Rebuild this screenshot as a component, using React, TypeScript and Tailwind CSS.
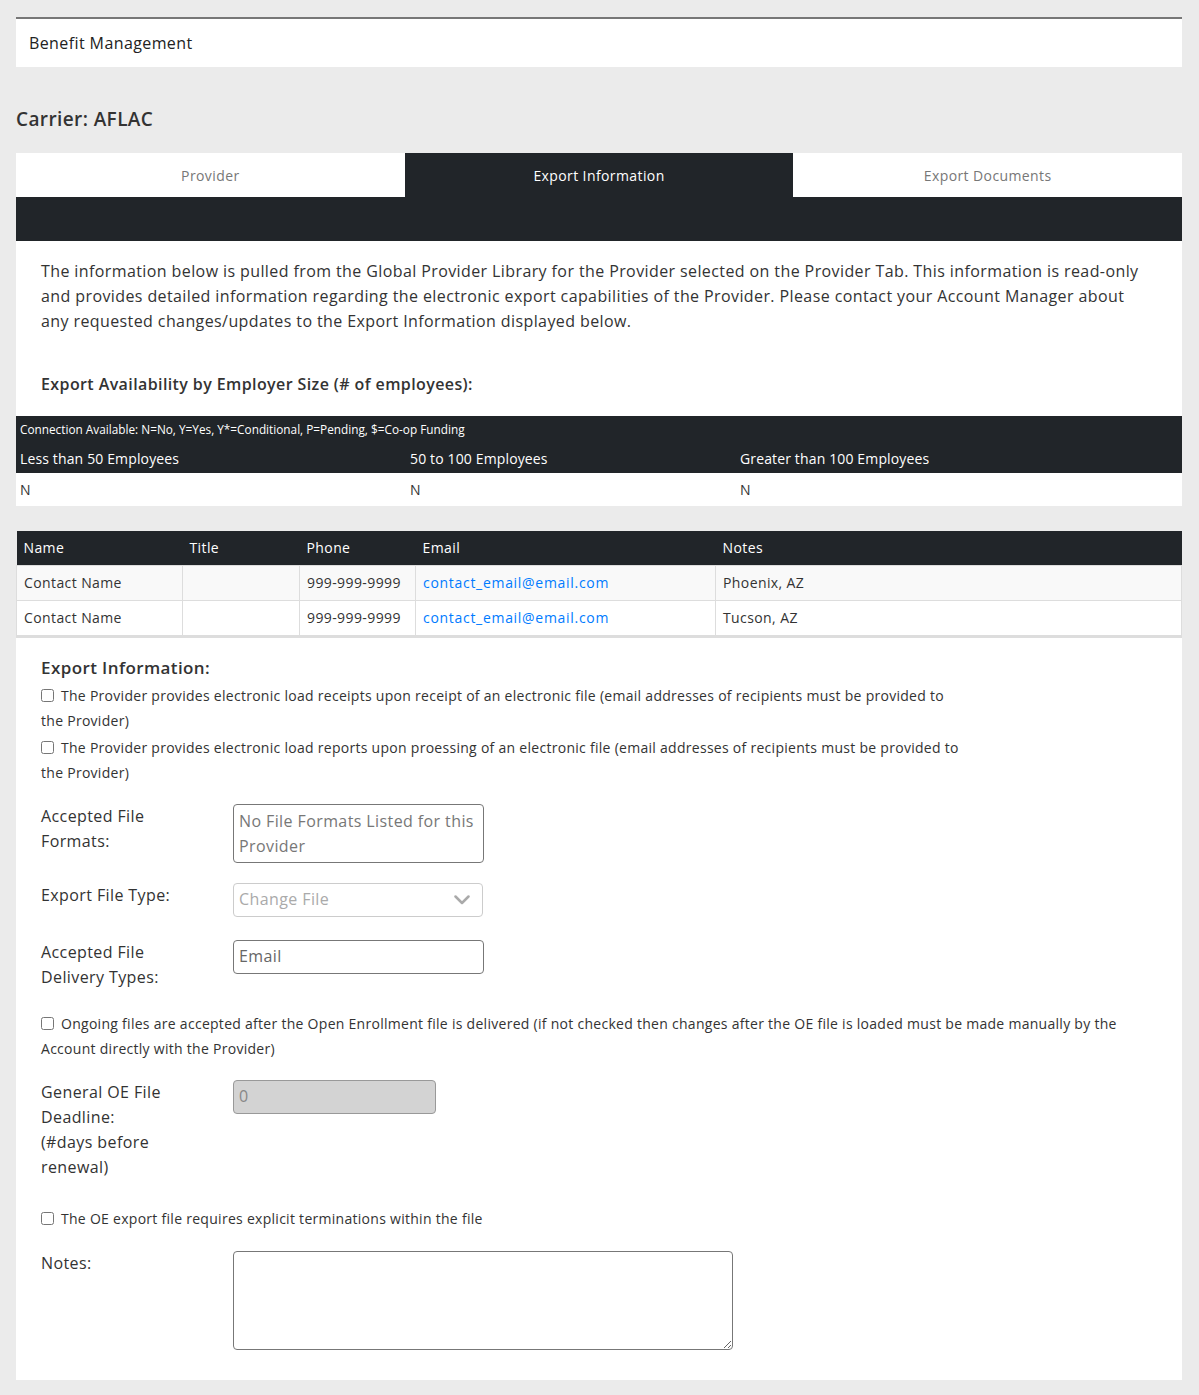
import React from "react";

function Check({ children, className = "" }: { children: React.ReactNode; className?: string }) {
  return (
    <label className={"block whitespace-nowrap tracking-[0.02em] " + className}>
      <input type="checkbox" className="mr-[7px] h-[13px] w-[13px] align-[-1px]" />
      {children}
    </label>
  );
}

export default function App() {
  const cols = "grid grid-cols-[390px_330px_1fr] items-center px-[4px]";
  return (
    <div className="min-h-[1395px] bg-[#ebebeb] pl-[16px] pr-[17px] pt-[17px] pb-[15px] font-['Open_Sans',sans-serif] tracking-[0.025em] text-[#333]">
      {/* Header */}
      <div className="flex h-[50px] items-center border-t-2 border-[#777] bg-white px-[13px] pb-[1px] text-[16px] text-[#222]">
        Benefit Management
      </div>

      <h2 className="mt-[40px] h-[24px] text-[19px] font-semibold leading-[24px] text-[#333]">Carrier: AFLAC</h2>

      {/* Tabs */}
      <div className="mt-[22px] flex h-[44px] text-[14px]">
        <div className="flex flex-1 items-center justify-center bg-white text-[#777]">Provider</div>
        <div className="flex flex-1 items-center justify-center bg-[#212529] text-white">Export Information</div>
        <div className="flex flex-1 items-center justify-center bg-white text-[#777]">Export Documents</div>
      </div>
      <div className="h-[44px] bg-[#212529]" />

      {/* Panel 1 */}
      <div className="bg-white">
        <div className="px-[25px] pt-[18px]">
          <p className="max-w-[1105px] text-[16px] leading-[25px]">
            The information below is pulled from the Global Provider Library for the Provider selected on the Provider Tab. This information is read-only and provides detailed information regarding the electronic export capabilities of the Provider. Please contact your Account Manager about any requested changes/updates to the Export Information displayed below.
          </p>
          <h3 className="mt-[38px] text-[16px] font-semibold leading-[25px]">
            Export Availability by Employer Size (# of employees):
          </h3>
        </div>
        <div className="mt-[19px]">
          <div className="bg-[#212529] text-white">
            <div className="flex h-[28px] items-center px-[4px] text-[11.8px] tracking-normal">
              Connection Available: N=No, Y=Yes, Y*=Conditional, P=Pending, $=Co-op Funding
            </div>
            <div className={cols + " h-[29px] text-[14px] tracking-[0.01em]"}>
              <div>Less than 50 Employees</div>
              <div>50 to 100 Employees</div>
              <div>Greater than 100 Employees</div>
            </div>
          </div>
          <div className={cols + " h-[33px] text-[14px]"}>
            <div>N</div>
            <div>N</div>
            <div>N</div>
          </div>
        </div>
      </div>

      {/* Contacts */}
      <div className="mt-[25px] border-b-2 border-[#ddd]">
        <table className="w-full table-fixed border-collapse text-[14px]">
          <colgroup>
            <col className="w-[166px]" />
            <col className="w-[117px]" />
            <col className="w-[116px]" />
            <col className="w-[300px]" />
            <col />
          </colgroup>
          <thead>
            <tr className="h-[34px] bg-[#212529] text-white">
              <th className="px-[7px] text-left font-medium">Name</th>
              <th className="px-[7px] text-left font-medium">Title</th>
              <th className="px-[7px] text-left font-medium">Phone</th>
              <th className="px-[7px] text-left font-medium">Email</th>
              <th className="px-[7px] text-left font-medium">Notes</th>
            </tr>
          </thead>
          <tbody>
            <tr className="h-[35px] bg-[#f9f9f9]">
              <td className="border border-[#ddd] px-[7px]">Contact Name</td>
              <td className="border border-[#ddd] px-[7px]"></td>
              <td className="border border-[#ddd] px-[7px]">999-999-9999</td>
              <td className="border border-[#ddd] px-[7px] tracking-[0.05em] text-[#007bff]">contact_email@email.com</td>
              <td className="border border-[#ddd] px-[7px]">Phoenix, AZ</td>
            </tr>
            <tr className="h-[35px] bg-white">
              <td className="border border-[#ddd] px-[7px]">Contact Name</td>
              <td className="border border-[#ddd] px-[7px]"></td>
              <td className="border border-[#ddd] px-[7px]">999-999-9999</td>
              <td className="border border-[#ddd] px-[7px] tracking-[0.05em] text-[#007bff]">contact_email@email.com</td>
              <td className="border border-[#ddd] px-[7px]">Tucson, AZ</td>
            </tr>
          </tbody>
        </table>
      </div>

      {/* Panel 2 */}
      <div className="bg-white px-[25px] pt-[17px] pb-[30px]">
        <h3 className="text-[17px] font-semibold leading-[25px]">Export Information:</h3>
        <div className="mt-[3px] text-[14px] leading-[25px]">
          <Check>
            The Provider provides electronic load receipts upon receipt of an electronic file (email addresses of recipients must be provided to
            <br />
            the Provider)
          </Check>
          <Check className="mt-[2px]">
            The Provider provides electronic load reports upon proessing of an electronic file (email addresses of recipients must be provided to
            <br />
            the Provider)
          </Check>
        </div>

        <div className="mt-[19px] grid grid-cols-[192px_1fr] text-[16px] leading-[25px]">
          <div>
            Accepted File
            <br />
            Formats:
          </div>
          <div className="h-[59px] w-[251px] rounded-[4px] border border-[#777] px-[5px] py-[4px] text-[#777]">
            No File Formats Listed for this Provider
          </div>
        </div>

        <div className="mt-[20px] grid grid-cols-[192px_1fr] text-[16px] leading-[25px]">
          <div>Export File Type:</div>
          <div className="flex h-[34px] w-[250px] items-center justify-between rounded-[4px] border border-[#ccc] pl-[5px] pr-[12px] text-[#aaa]">
            <span>Change File</span>
            <svg width="16" height="10" viewBox="0 0 16 10" fill="none">
              <polyline points="1.5,1.5 8,8 14.5,1.5" stroke="#aaa" strokeWidth="2.5" strokeLinecap="round" strokeLinejoin="round" />
            </svg>
          </div>
        </div>

        <div className="mt-[23px] grid grid-cols-[192px_1fr] text-[16px] leading-[25px]">
          <div>
            Accepted File
            <br />
            Delivery Types:
          </div>
          <div className="flex h-[34px] w-[251px] items-center rounded-[4px] border border-[#777] px-[5px] text-[#666]">
            Email
          </div>
        </div>

        <div className="mt-[21px] text-[14px] leading-[25px]">
          <Check>
            Ongoing files are accepted after the Open Enrollment file is delivered (if not checked then changes after the OE file is loaded must be made manually by the
            <br />
            Account directly with the Provider)
          </Check>
        </div>

        <div className="mt-[19px] grid grid-cols-[192px_1fr] text-[16px] leading-[25px]">
          <div>
            General OE File
            <br />
            Deadline:
            <br />
            (#days before
            <br />
            renewal)
          </div>
          <div className="flex h-[34px] w-[203px] items-center rounded-[4px] border border-[#999] bg-[#d3d3d3] px-[5px] text-[#888]">
            0
          </div>
        </div>

        <div className="mt-[26px] text-[14px] leading-[25px]">
          <Check>The OE export file requires explicit terminations within the file</Check>
        </div>

        <div className="mt-[20px] grid grid-cols-[192px_1fr] text-[16px] leading-[25px]">
          <div>Notes:</div>
          <textarea className="h-[99px] w-[500px] rounded-[4px] border border-[#777] bg-white" />
        </div>
      </div>
    </div>
  );
}
